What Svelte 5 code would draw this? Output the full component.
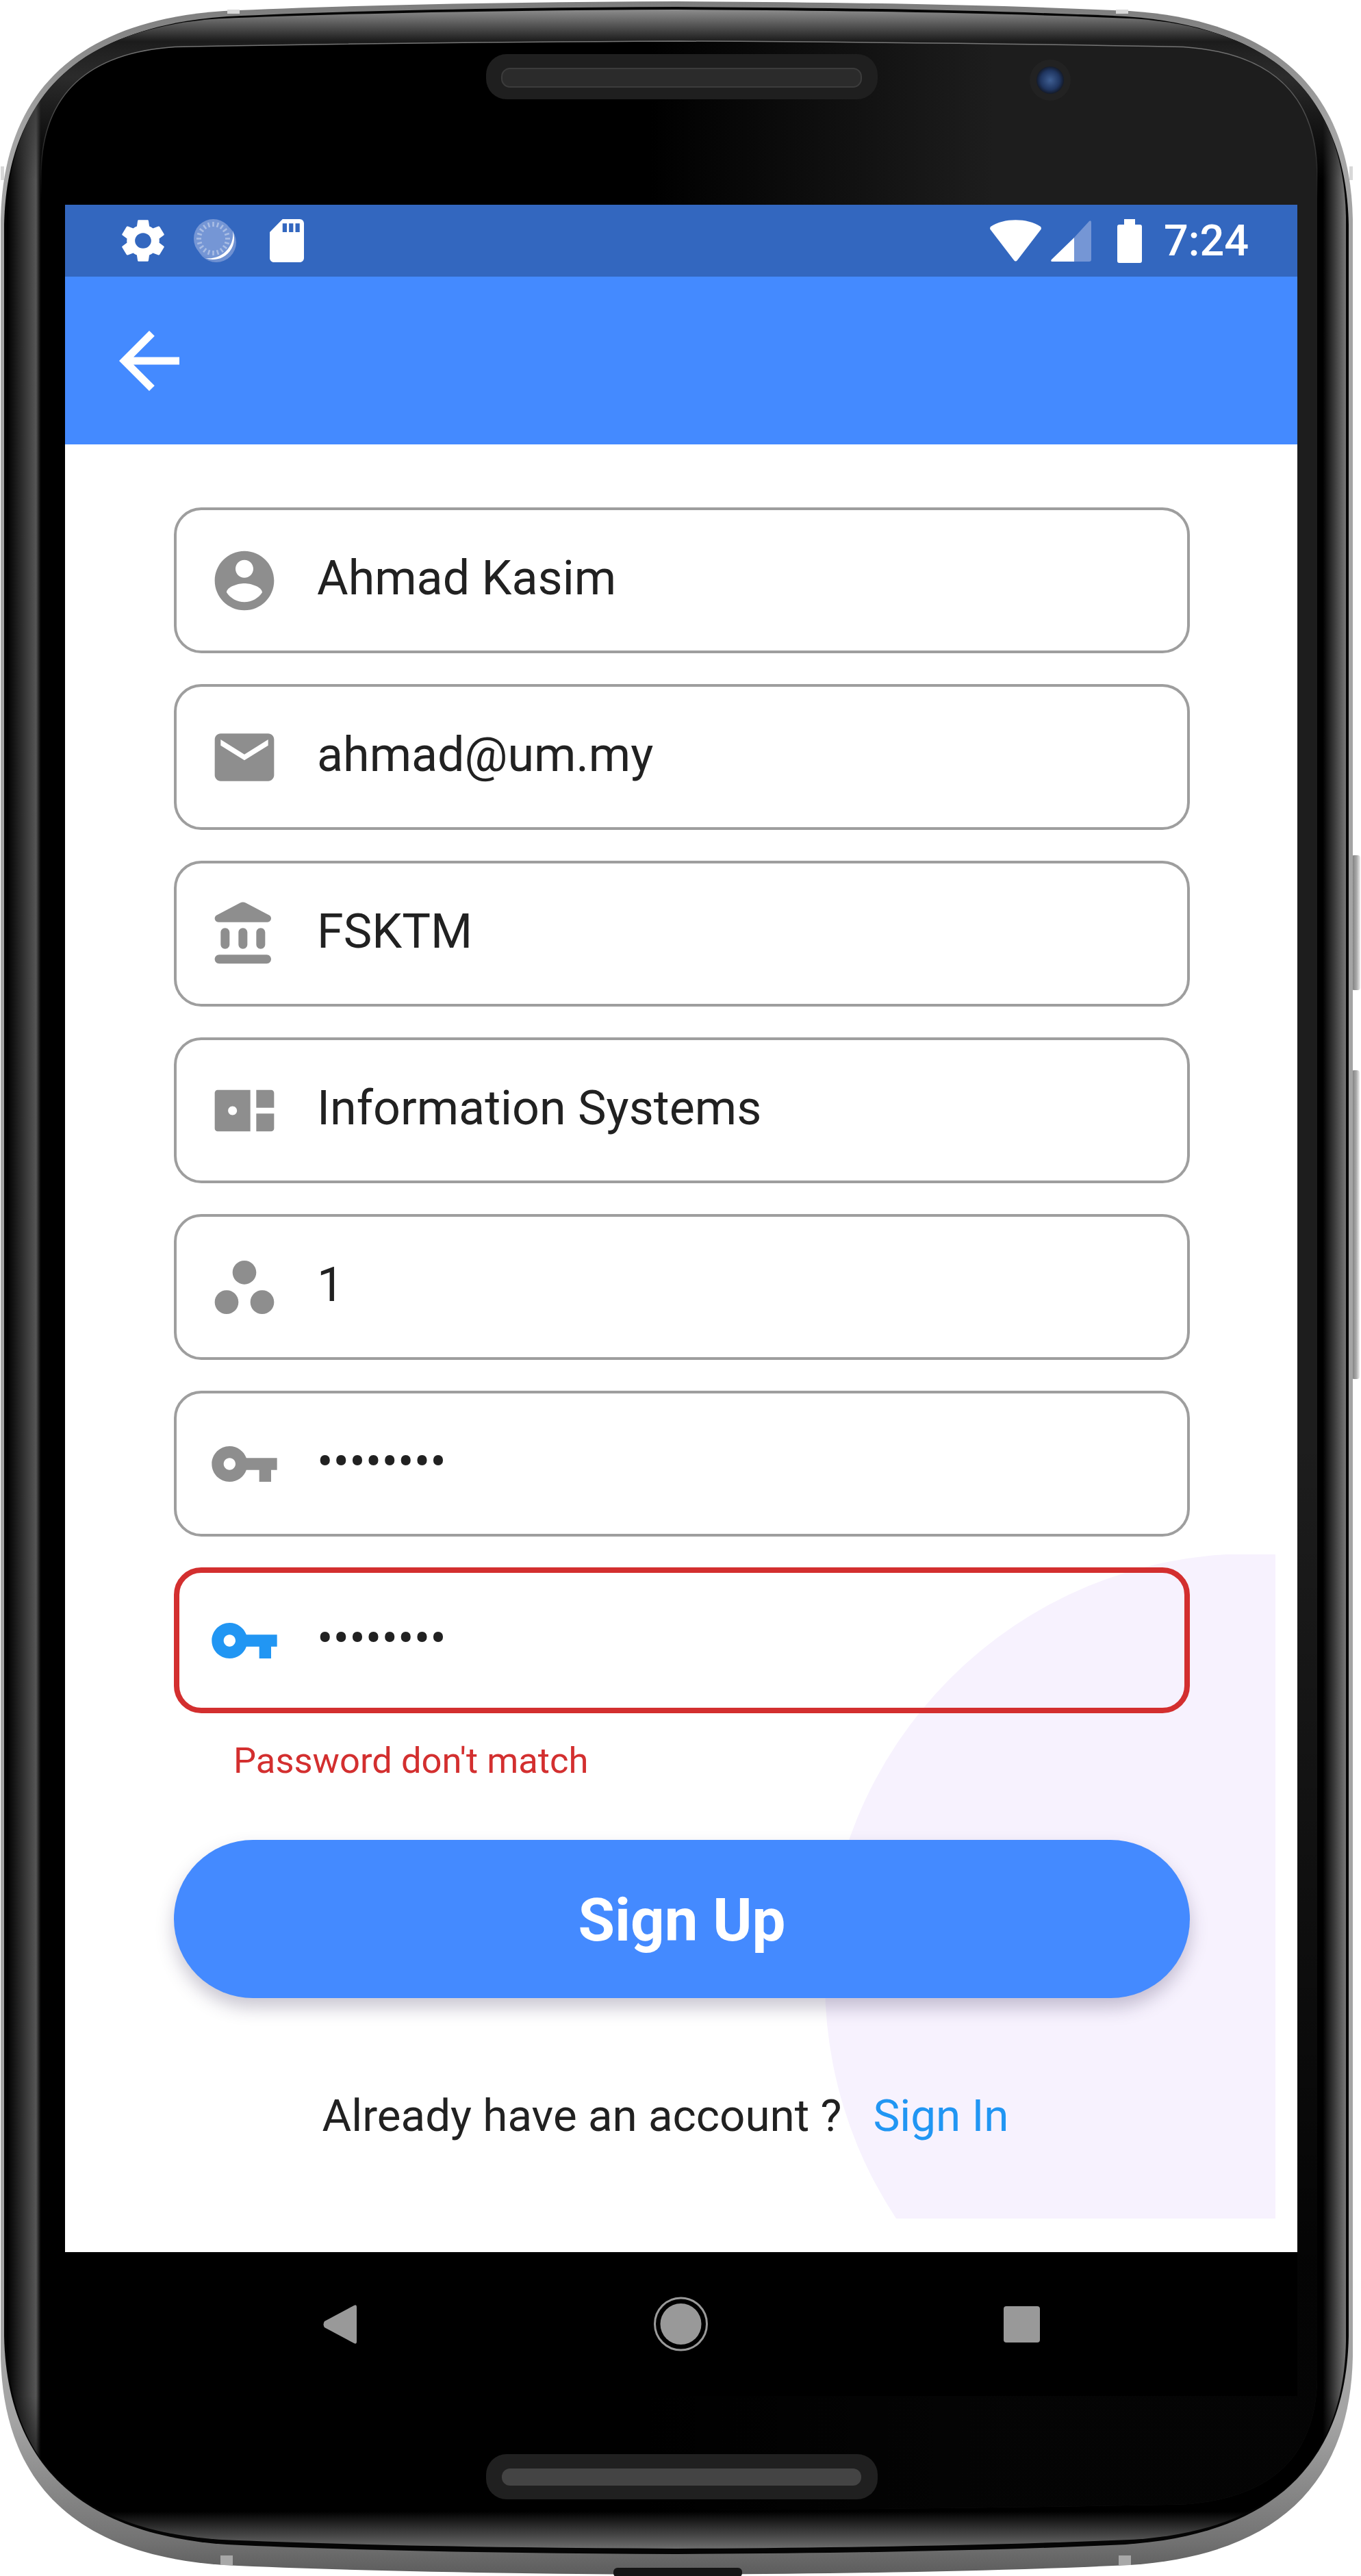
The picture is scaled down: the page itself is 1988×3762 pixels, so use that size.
<script>
  // device outline, insets given as absolute coords, k scales the corner
  const outline = (l, t, r, b, k = 1) => {
    const cx = (l + r) / 2;
    const a = 326 * k, c = 116 * k, d = 128 * k, e = 318 * k, f = 14 * k, g = 28 * k, h = 4 * k;
    return `M${cx} ${t}Q${cx + 410} ${t + 2} ${r - a} ${t + f}C${r - c} ${t + g} ${r - h} ${t + d} ${r} ${t + e}L${r} ${b - e}` +
      `C${r - h} ${b - d} ${r - c} ${b - g} ${r - a} ${b - f}Q${cx + 410} ${b - 2} ${cx} ${b}Q${cx - 410} ${b - 2} ${l + a} ${b - f}` +
      `C${l + c} ${b - g} ${l + h} ${b - d} ${l} ${b - e}L${l} ${t + e}C${l + h} ${t + d} ${l + c} ${t + g} ${l + a} ${t + f}Q${cx - 410} ${t + 2} ${cx} ${t}Z`;
  };

  const key = 'M12.65 10C11.83 7.67 9.61 6 7 6c-3.31 0-6 2.69-6 6s2.69 6 6 6c2.61 0 4.83-1.67 5.65-4H17v4h4v-4h2v-4H12.65zM7 14c-1.1 0-2-.9-2-2s.9-2 2-2 2 .9 2 2-.9 2-2 2z';

  const fields = [
    { value: 'Ahmad Kasim', icon: 'M12 2C6.48 2 2 6.48 2 12s4.48 10 10 10 10-4.48 10-10S17.52 2 12 2zm0 3c1.66 0 3 1.34 3 3s-1.34 3-3 3-3-1.34-3-3 1.34-3 3-3zm0 14.2c-2.5 0-4.71-1.28-6-3.22.03-1.99 4-3.08 6-3.08 1.99 0 5.97 1.09 6 3.08-1.29 1.94-3.5 3.22-6 3.22z' },
    { value: 'ahmad@um.my', icon: 'M20 4H4c-1.1 0-1.99.9-1.99 2L2 18c0 1.1.9 2 2 2h16c1.1 0 2-.9 2-2V6c0-1.1-.9-2-2-2zm0 4l-8 5-8-5V6l8 5 8-5v2z' },
    { value: 'FSKTM', icon: 'M4 11.5v4c0 .83.67 1.5 1.5 1.5S7 16.33 7 15.5v-4c0-.83-.67-1.5-1.5-1.5S4 10.67 4 11.5zm6 0v4c0 .83.67 1.5 1.5 1.5s1.5-.67 1.5-1.5v-4c0-.83-.67-1.5-1.5-1.5s-1.5.67-1.5 1.5zM3.5 22h16c.83 0 1.5-.67 1.5-1.5s-.67-1.5-1.5-1.5h-16c-.83 0-1.5.67-1.5 1.5S2.67 22 3.5 22zM16 11.5v4c0 .83.67 1.5 1.5 1.5s1.5-.67 1.5-1.5v-4c0-.83-.67-1.5-1.5-1.5s-1.5.67-1.5 1.5zM10.57 1.49l-7.9 4.16c-.41.21-.67.64-.67 1.1C2 7.44 2.56 8 3.25 8h16.51C20.44 8 21 7.44 21 6.75c0-.46-.26-.89-.67-1.1l-7.9-4.16c-.58-.31-1.28-.31-1.86 0z' },
    { value: 'Information Systems', icon: 'M3 5h11v14H3c-.55 0-1-.45-1-1V6c0-.55.45-1 1-1zm5 5.5c-.83 0-1.5.67-1.5 1.5s.67 1.5 1.5 1.5 1.5-.67 1.5-1.5-.67-1.5-1.5-1.5zM16 5h5c.55 0 1 .45 1 1v5h-6V5zm0 8h6v5c0 .55-.45 1-1 1h-5v-6z' },
    { value: '1', icon: 'M6 13c-2.2 0-4 1.8-4 4s1.8 4 4 4 4-1.8 4-4-1.8-4-4-4zm6-10C9.8 3 8 4.8 8 7s1.8 4 4 4 4-1.8 4-4-1.8-4-4-4zm6 10c-2.2 0-4 1.8-4 4s1.8 4 4 4 4-1.8 4-4-1.8-4-4-4z' },
    { value: '••••••••', icon: key },
    { value: '••••••••', icon: key, error: true }
  ];

  const ticks = Array.from({ length: 20 }, (_, i) => i * 18);
</script>

<div class="device">
  <!-- phone body, sits behind the screen -->
  <svg class="body" viewBox="0 0 1988 3762" width="1988" height="3762" aria-hidden="true">
    <defs>
      <linearGradient id="bandX" gradientUnits="userSpaceOnUse" x1="0" y1="0" x2="1988" y2="0">
        <stop offset="0.005" stop-color="#000" />
        <stop offset="0.0265" stop-color="#565656" />
        <stop offset="0.03" stop-color="#000" />
        <stop offset="0.972" stop-color="#000" />
        <stop offset="0.989" stop-color="#787878" />
      </linearGradient>
      <linearGradient id="bandY" gradientUnits="userSpaceOnUse" x1="0" y1="0" x2="0" y2="3762">
        <stop offset="0.004" stop-color="#8a8a8a" />
        <stop offset="0.016" stop-color="#1c1c1c" />
        <stop offset="0.03" stop-color="#333" stop-opacity="0.85" />
        <stop offset="0.07" stop-color="#2a2a2a" stop-opacity="0" />
        <stop offset="0.93" stop-color="#000" stop-opacity="0" />
        <stop offset="0.975" stop-color="#000" />
        <stop offset="0.989" stop-color="#6a6a6a" />
      </linearGradient>
      <linearGradient id="faceX" gradientUnits="userSpaceOnUse" x1="950" y1="0" x2="1450" y2="0">
        <stop offset="0" stop-color="#000" />
        <stop offset="1" stop-color="#1d1d1d" />
      </linearGradient>
      <linearGradient id="faceY" gradientUnits="userSpaceOnUse" x1="0" y1="2100" x2="0" y2="3300">
        <stop offset="0" stop-color="#000" stop-opacity="0" />
        <stop offset="1" stop-color="#000" stop-opacity="0.85" />
      </linearGradient>
      <linearGradient id="faceLine" gradientUnits="userSpaceOnUse" x1="0" y1="60" x2="0" y2="290">
        <stop offset="0" stop-color="#777" />
        <stop offset="1" stop-color="#777" stop-opacity="0" />
      </linearGradient>
      <linearGradient id="rim" gradientUnits="userSpaceOnUse" x1="0" y1="0" x2="0" y2="3762">
        <stop offset="0" stop-color="#7c7c7c" />
        <stop offset="0.05" stop-color="#a4a4a4" />
        <stop offset="0.94" stop-color="#a4a4a4" />
        <stop offset="0.985" stop-color="#747474" />
        <stop offset="1" stop-color="#5c5c5c" />
      </linearGradient>
      <linearGradient id="sideKey" x1="0" y1="0" x2="1" y2="0">
        <stop offset="0" stop-color="#777" />
        <stop offset="0.6" stop-color="#aaa" />
        <stop offset="1" stop-color="#eee" />
      </linearGradient>
      <radialGradient id="lens">
        <stop offset="0" stop-color="#3f5f93" />
        <stop offset="0.7" stop-color="#1f3560" />
        <stop offset="1" stop-color="#141b2a" />
      </radialGradient>
    </defs>

    <rect x="1974" y="1249" width="13" height="197" rx="4" fill="url(#sideKey)" />
    <rect x="1974" y="1563" width="12" height="451" rx="4" fill="url(#sideKey)" />
    <path d={outline(1, 2, 1976, 3760)} fill="url(#rim)" />
    <path d={outline(6, 10, 1970, 3730)} fill="#050505" />
    <path d={outline(10, 14, 1966, 3722, 0.95)} fill="url(#bandX)" />
    <path d={outline(10, 14, 1966, 3722, 0.95)} fill="url(#bandY)" />
    <path d={outline(60, 60, 1924, 3666, 0.6)} fill="url(#faceX)" stroke="url(#faceLine)" stroke-width="1.500" />
    <path d={outline(60, 60, 1924, 3666, 0.6)} fill="url(#faceY)" />

    <rect x="332" y="14" width="18" height="6" fill="#d8d8d8" />
    <rect x="1630" y="14" width="18" height="6" fill="#d8d8d8" />
    <rect x="1" y="243" width="5" height="20" fill="#d8d8d8" />
    <rect x="1971" y="243" width="5" height="20" fill="#d8d8d8" />
    <rect x="322" y="3732" width="18" height="14" fill="#a8a8a8" />
    <rect x="1634" y="3732" width="18" height="14" fill="#a8a8a8" />

    <rect x="710" y="79" width="572" height="66" rx="30" fill="#1f1f1f" />
    <rect x="733" y="100" width="525" height="27" rx="12" fill="#2b2b2b" stroke="#3c3c3c" stroke-width="2" />
    <rect x="710" y="3584" width="572" height="66" rx="30" fill="#202020" />
    <rect x="733" y="3605" width="525" height="25" rx="12" fill="#444" />
    <circle cx="1534" cy="117" r="30" fill="#222" />
    <circle cx="1534" cy="117" r="20" fill="url(#lens)" />
    <rect x="896" y="3750" width="188" height="14" rx="6" fill="#161616" />
  </svg>

  <div class="screen">
    <div class="status">
      <svg class="gear" viewBox="2.6 2 18.8 20" preserveAspectRatio="none"><path d="M19.14 12.94c.04-.3.06-.61.06-.94 0-.32-.02-.64-.07-.94l2.03-1.58c.18-.14.23-.41.12-.61l-1.92-3.32c-.12-.22-.37-.29-.59-.22l-2.39.96c-.5-.38-1.03-.7-1.62-.94l-.36-2.54c-.04-.24-.24-.41-.48-.41h-3.84c-.24 0-.43.17-.47.41l-.36 2.54c-.59.24-1.13.57-1.62.94l-2.39-.96c-.22-.08-.47 0-.59.22L2.74 8.87c-.12.21-.08.47.12.61l2.03 1.58c-.05.3-.09.63-.09.94s.02.64.07.94l-2.03 1.58c-.18.14-.23.41-.12.61l1.92 3.32c.12.22.37.29.59.22l2.39-.96c.5.38 1.03.7 1.62.94l.36 2.54c.05.24.24.41.48.41h3.84c.24 0 .44-.17.47-.41l.36-2.54c.59-.24 1.13-.56 1.62-.94l2.39.96c.22.08.47 0 .59-.22l1.92-3.32c.12-.22.07-.47-.12-.61l-2.01-1.58zM12 15.6c-1.98 0-3.6-1.62-3.6-3.6s1.62-3.6 3.6-3.6 3.6 1.62 3.6 3.6-1.62 3.6-3.6 3.6z" /></svg>
      <svg class="spinner" viewBox="0 0 62 63">
        <circle cx="33" cy="34" r="29" class="disc-back" />
        <circle cx="28.500" cy="28.500" r="28.500" class="disc" />
        {#each ticks as a}
          <line x1="28.500" y1="4" x2="28.500" y2="11" class="tick" transform="rotate({a} 28.500 28.500)" />
        {/each}
        <path d="M57 17A31 31 0 0 1 17 57A35.400 35.400 0 0 0 57 17Z" class="crescent" />
      </svg>
      <svg class="sd" viewBox="4 2 16 20" preserveAspectRatio="none"><path d="M18 2h-8L4.02 8 4 20c0 1.1.9 2 2 2h12c1.1 0 2-.9 2-2V4c0-1.1-.9-2-2-2zm-6 6h-2V4h2v4zm3 0h-2V4h2v4zm3 0h-2V4h2v4z" /></svg>

      <div class="status-right">
        <svg class="wifi" viewBox="0 0 75 61"><path d="M1 10C20-3 55-3 74 10Q75.500 12 74.500 14L40 59Q37.500 62 35 59L.5 14Q-.5 12 1 10Z" /></svg>
        <svg class="signal" viewBox="0 0 59 60">
          <path d="M34 25V60H2Q-1 60 1 57Z" />
          <path d="M34 25 56 1Q59-1 59 3V57Q59 60 56 60H34Z" class="dim" />
        </svg>
        <svg class="battery" viewBox="0 0 36 64"><path d="M10 0H26V8H33Q36 8 36 11V61Q36 64 33 64H3Q0 64 0 61V11Q0 8 3 8H10Z" /></svg>
        <span class="time">7:24</span>
      </div>
    </div>

    <div class="appbar">
      <svg class="back" viewBox="4 4 16 16"><path d="M20 11H7.83l5.59-5.59L12 4l-8 8 8 8 1.41-1.41L7.83 13H20v-2z" /></svg>
    </div>

    <div class="content">
      <div class="blob"><div class="circle"></div></div>

      <div class="form">
        {#each fields as f}
          <div class="field" class:error={f.error}>
            <svg class="icon" viewBox="0 0 24 24"><path d={f.icon} /></svg>
            <span class="value">{f.value}</span>
          </div>
        {/each}
      </div>

      <p class="error-text">Password don't match</p>
      <button class="submit">Sign Up</button>

      <div class="footer">
        <span>Already have an account ?</span>
        <span class="link">Sign In</span>
      </div>
    </div>

    <div class="nav">
      <svg class="nav-back" viewBox="0 0 49 57"><path d="M2 24 45 1Q49-1 49 3V54Q49 58 45 56L2 33Q-1 28.500 2 24Z" /></svg>
      <svg class="nav-home" viewBox="0 0 79 80">
        <circle cx="39.500" cy="40" r="38" class="ring" />
        <circle cx="39.500" cy="40" r="30" class="dot" />
      </svg>
      <div class="nav-square"></div>
    </div>
  </div>
</div>

<style>
  :global(body) {
    background: #fff;
  }

  .device {
    position: relative;
    width: 1988px;
    height: 3762px;
    box-sizing: border-box;
    padding: 299px 0 0 95px;
    overflow: hidden;
    font-family: Roboto, "Liberation Sans", sans-serif;
    color: #212121;
  }

  .body {
    position: absolute;
    left: 0;
    top: 0;
  }

  .screen {
    position: relative;
    width: 1800px;
  }

  /* status bar */
  .status {
    display: flex;
    align-items: center;
    height: 105px;
    padding: 0 71px 0 83px;
    background: #3367bf;
    fill: #fff;
    color: #fff;
  }

  .gear { width: 62px; height: 63px; }
  .spinner { width: 62px; height: 63px; margin-left: 43px; }
  .sd { width: 50px; height: 63px; margin-left: 49px; }

  .disc { fill: #7596d5; }
  .disc-back { fill: #6f91d2; }
  .tick { stroke: #a9bde4; stroke-width: 2.6; }
  .crescent { fill: #fff; }

  .status-right {
    display: flex;
    align-items: center;
    margin-left: auto;
  }

  .wifi { width: 75px; height: 61px; }
  .signal { width: 59px; height: 60px; margin-left: 14px; }
  .battery { width: 36px; height: 64px; margin-left: 38px; }
  .dim { fill: #7596d5; }

  .time {
    margin-left: 32px;
    font-size: 63px;
    font-weight: 500;
    line-height: 1;
  }

  /* app bar */
  .appbar {
    display: flex;
    align-items: center;
    height: 245px;
    padding-left: 79px;
    background: #448aff;
  }

  .back {
    width: 88px;
    height: 88px;
    fill: #fff;
  }

  /* form */
  .content {
    position: relative;
    height: 2640px;
    box-sizing: border-box;
    padding: 92px 157px 0 159px;
    background: #fff;
  }

  .blob {
    position: absolute;
    top: 1621px;
    right: 32px;
    width: 763px;
    height: 970px;
    overflow: hidden;
  }

  .circle {
    width: 1244px;
    height: 1250px;
    margin: -1px 0 0 105px;
    border-radius: 50%;
    background: #f7f2fe;
  }

  .form {
    position: relative;
    display: flex;
    flex-direction: column;
    gap: 45px;
  }

  .field {
    display: flex;
    align-items: center;
    height: 213px;
    box-sizing: border-box;
    padding-left: 47px;
    border: 4px solid #9e9e9e;
    border-radius: 40px;
    fill: #8e8e8e;
  }

  .field.error {
    padding-left: 43px;
    border: 8px solid #d32f2f;
    fill: #2196f3;
  }

  .icon {
    width: 104px;
    height: 104px;
    flex: none;
  }

  .value {
    margin: 0 0 7px 54px;
    font-size: 70px;
    line-height: 1.2;
    white-space: nowrap;
  }

  .error-text {
    position: relative;
    margin: 38px 0 0 87px;
    font-size: 52.500px;
    line-height: 62px;
    color: #d32f2f;
  }

  .submit {
    position: relative;
    display: block;
    width: 100%;
    height: 231px;
    margin-top: 85px;
    padding: 3px 0 0;
    border: 0;
    border-radius: 116px;
    background: #448aff;
    box-shadow: 0 14px 26px rgba(50, 40, 80, 0.26);
    font-family: inherit;
    font-size: 87px;
    font-weight: 700;
    color: #fff;
  }

  .footer {
    position: relative;
    display: flex;
    justify-content: center;
    gap: 46px;
    margin-top: 130px;
    padding-right: 48px;
    font-size: 65.500px;
    line-height: 84px;
  }

  .link {
    color: #2196f3;
  }

  /* android nav */
  .nav {
    display: flex;
    align-items: center;
    height: 210px;
    padding-left: 377px;
    background: #000;
  }

  .nav-back { width: 49px; height: 57px; fill: #999; }
  .nav-home { width: 79px; height: 80px; margin-left: 434px; }
  .ring { fill: none; stroke: #9a9a9a; stroke-width: 3; }
  .dot { fill: #999; }

  .nav-square {
    width: 53px;
    height: 53px;
    margin-left: 432px;
    border-radius: 4px;
    background: #999;
  }
</style>
